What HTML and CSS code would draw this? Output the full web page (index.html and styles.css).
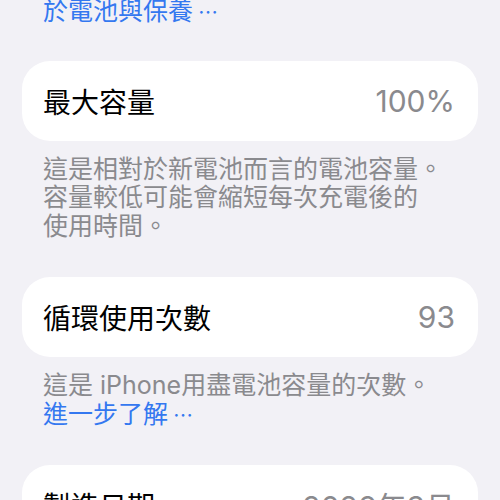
FILE: index.html
```html
<!DOCTYPE html>
<html lang="zh-Hant">
<head>
    <meta charset="UTF-8">
    <meta name="viewport" content="width=device-width, initial-scale=1.0">
    <title>電池健康度</title>
    <link rel="stylesheet" href="styles.css">
</head>
<body>
    <div class="page">
        <p class="note note-top"><a class="link" href="#">於電池與保養<span class="dots">⋯</span></a></p>

        <div class="card">
            <span class="label">最大容量</span>
            <span class="value">100%</span>
        </div>
        <p class="note">這是相對於新電池而言的電池容量。<br>容量較低可能會縮短每次充電後的<br>使用時間。</p>

        <div class="card">
            <span class="label">循環使用次數</span>
            <span class="value">93</span>
        </div>
        <p class="note">這是 iPhone用盡電池容量的次數。<br><a class="link" href="#">進一步了解<span class="dots">⋯</span></a></p>

        <div class="card">
            <span class="label">製造日期</span>
            <span class="value">2026年3月</span>
        </div>
    </div>
</body>
</html>
```

FILE: styles.css
```css
body {
    margin: 0;
    background-color: #f2f1f6;
    font-family: Inter, "Noto Sans CJK TC", sans-serif;
    overflow: hidden;
}
.page {
    padding: 0 22px;
}
.note {
    margin: 0;
    padding: 14px 21px 0;
    font-size: 25px;
    line-height: 28.5px;
    color: #8a8a8e;
}
.note-top {
    margin-top: -3px;
    padding-top: 0;
}
.link {
    color: #3478f0;
    text-decoration: none;
}
.dots {
    font-family: "Noto Sans CJK TC", sans-serif;
    font-size: 20px;
    line-height: 1;
    margin-left: 5px;
}
.card {
    display: flex;
    justify-content: space-between;
    align-items: center;
    height: 80px;
    margin-top: 37px;
    padding: 0 23px 0 21px;
    background-color: #ffffff;
    border-radius: 28px;
}
.note-top + .card {
    margin-top: 35px;
}
.label {
    font-size: 28px;
    color: #000000;
}
.value {
    font-size: 30px;
    color: #8a8a8e;
}
```
